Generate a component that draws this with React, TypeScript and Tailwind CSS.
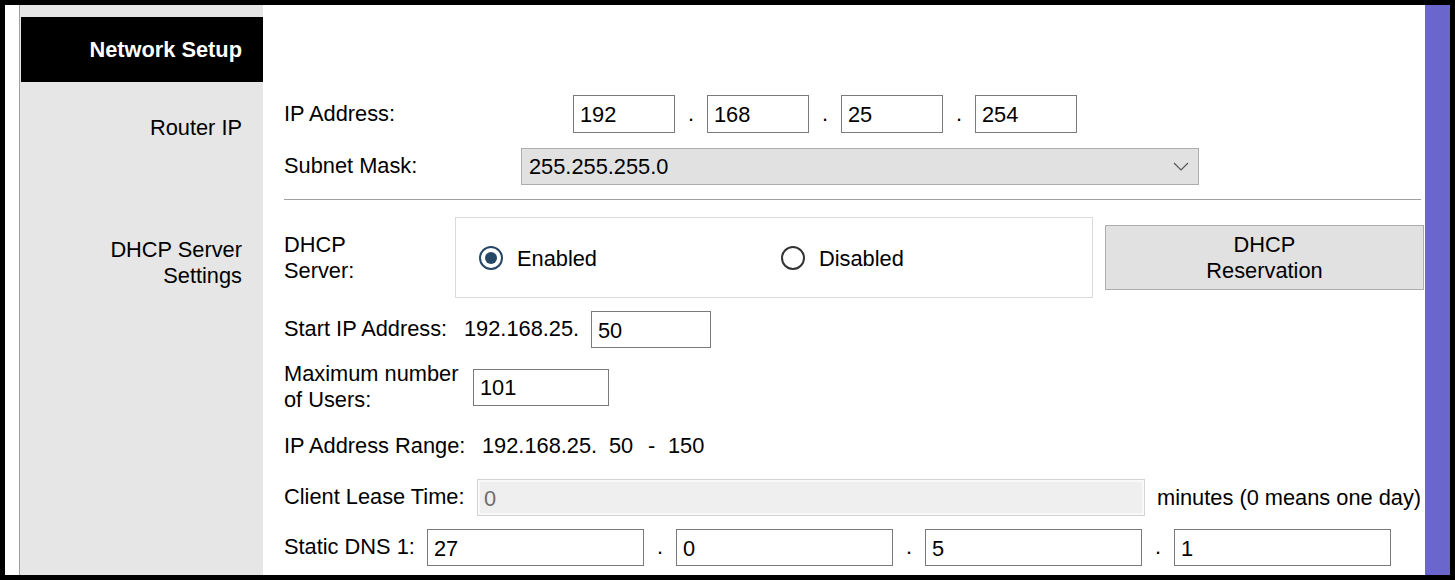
import React from "react";

const box = "border border-[#7a7a7a] bg-white px-[6px] pt-[2px] outline-none text-black";

function Dot() {
  return <span className="w-[32px] text-center">.</span>;
}

function Radio({ checked, label, className }: { checked?: boolean; label: string; className?: string }) {
  return (
    <label className={`flex items-center gap-[14px] ${className ?? ""}`}>
      <span
        className={`w-[24px] h-[24px] rounded-full border-2 flex items-center justify-center ${
          checked ? "border-[#274766]" : "border-[#333333]"
        }`}
      >
        {checked && <span className="w-[12px] h-[12px] rounded-full bg-[#274766]" />}
      </span>
      <span className="pt-[2px]">{label}</span>
    </label>
  );
}

// left gray column cell + content cell
function Section({
  side,
  children,
  className,
  sideClass,
}: {
  side?: React.ReactNode;
  children?: React.ReactNode;
  className?: string;
  sideClass?: string;
}) {
  return (
    <div className={`flex ${className ?? ""}`}>
      <div className={`w-[243px] shrink-0 bg-[#e6e6e6] text-right pr-[21px] leading-[26px] ${sideClass ?? ""}`}>
        {side}
      </div>
      <div className="flex-1 pl-[21px] flex flex-col">{children}</div>
    </div>
  );
}

export default function App() {
  return (
    <div className="w-[1455px] h-[580px] bg-black p-[5px] font-['Liberation_Sans',Arial,sans-serif] text-[21.8px] text-black">
      <div className="flex h-full bg-white">
        {/* white strip left of the menu */}
        <div className="w-[14px] shrink-0" />
        <div className="flex-1 flex flex-col border-l border-[#a0a0a0]">
          <Section className="h-[12px]" />

          {/* header */}
          <div className="flex h-[65px]">
            <div className="w-[243px] shrink-0 bg-[#e6e6e6] pl-px">
              <div className="h-full bg-black flex items-center justify-end pr-[21px] pt-[2px] text-white font-bold">
                Network Setup
              </div>
            </div>
            <div className="flex-1" />
          </div>

          {/* Router IP */}
          <Section side="Router IP" sideClass="pt-[33px]">
            <div className="flex items-center h-[38px] mt-[13px]">
              <span className="w-[289px]">IP Address:</span>
              <input className={`${box} w-[102px] h-[38px]`} defaultValue="192" />
              <Dot />
              <input className={`${box} w-[102px] h-[38px]`} defaultValue="168" />
              <Dot />
              <input className={`${box} w-[102px] h-[38px]`} defaultValue="25" />
              <Dot />
              <input className={`${box} w-[102px] h-[38px]`} defaultValue="254" />
            </div>
            <div className="flex items-center h-[37px] mt-[15px]">
              <span className="w-[237px]">Subnet Mask:</span>
              <div className="w-[678px] h-[37px] bg-[#e1e1e1] border border-[#adadad] flex items-center justify-between pl-[7px] pr-[9px]">
                <span className="pt-px">255.255.255.0</span>
                <svg width="16" height="9" viewBox="0 0 16 9" fill="none">
                  <polyline points="1,1 8,8 15,1" stroke="#555" strokeWidth="1.2" />
                </svg>
              </div>
            </div>
            <div className="mt-[14px] mr-[4px] h-px bg-[#a0a0a0]" />
          </Section>

          {/* DHCP */}
          <Section side={<>DHCP Server<br />Settings</>} sideClass="pt-[37px]" className="flex-1">
            <div className="flex items-center mt-[17px]">
              <span className="w-[171px] leading-[26px]">
                DHCP
                <br />
                Server:
              </span>
              <div className="w-[638px] h-[81px] border border-[#dadada] flex items-center pl-[23px] pt-[1px]">
                <Radio checked label="Enabled" className="w-[302px]" />
                <Radio label="Disabled" />
              </div>
              <button className="ml-[12px] w-[319px] h-[65px] bg-[#e1e1e1] border border-[#adadad] leading-[26px]">
                DHCP
                <br />
                Reservation
              </button>
            </div>

            <div className="flex items-center h-[37px] mt-[13px]">
              <span className="w-[180px]">Start IP Address:</span>
              <span className="w-[127px]">192.168.25.</span>
              <input className={`${box} w-[120px] h-[37px]`} defaultValue="50" />
            </div>

            <div className="flex items-center h-[52px] mt-[13px]">
              <span className="w-[189px] leading-[26px]">
                Maximum number
                <br />
                of Users:
              </span>
              <input className={`${box} w-[136px] h-[37px]`} defaultValue="101" />
            </div>

            <div className="flex items-center h-[37px] mt-[15px]">
              <span className="w-[198px]">IP Address Range:</span>
              <span className="w-[127px]">192.168.25.</span>
              <span className="w-[39px]">50</span>
              <span className="w-[20px]">-</span>
              <span>150</span>
            </div>

            <div className="flex items-center h-[37px] mt-[14px]">
              <span className="w-[193px]">Client Lease Time:</span>
              <input
                disabled
                className="w-[668px] h-[37px] border border-[#d3d3d3] bg-[#efefef] shadow-[inset_0_0_0_2px_#f9f9f9] px-[6px] pt-[2px] text-[#6d6d6d]"
                defaultValue="0"
              />
              <span className="ml-[12px] pt-px whitespace-nowrap">minutes (0 means one day)</span>
            </div>

            <div className="flex items-center h-[37px] mt-[13px]">
              <span className="w-[143px]">Static DNS 1:</span>
              <input className={`${box} w-[217px] h-[37px]`} defaultValue="27" />
              <Dot />
              <input className={`${box} w-[217px] h-[37px]`} defaultValue="0" />
              <Dot />
              <input className={`${box} w-[217px] h-[37px]`} defaultValue="5" />
              <Dot />
              <input className={`${box} w-[217px] h-[37px]`} defaultValue="1" />
            </div>
          </Section>
        </div>
        {/* purple scrollbar-like strip */}
        <div className="w-[25px] shrink-0 bg-[#6a66cc]" />
      </div>
    </div>
  );
}
